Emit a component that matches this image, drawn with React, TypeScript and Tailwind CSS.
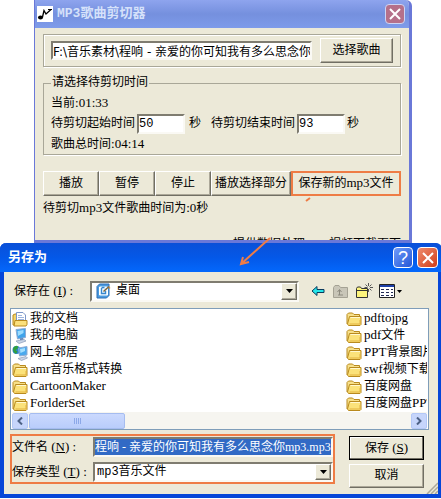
import React, { useEffect, useRef } from 'react';
import clsx from 'clsx';

const latin = "font-['Liberation_Serif',serif] text-[13px] whitespace-pre";

// Latin runs use their own font next to the Chinese text
const Txt: React.FC<{ children: string; className?: string }> = ({ children, className }) => (
  <span className={clsx('whitespace-nowrap', className)}>
    {children.split(/([\x20-\x7e]+)/).map((part, i) =>
      i % 2 ? (
        <span key={i} className={latin}>
          {part}
        </span>
      ) : (
        part
      )
    )}
  </span>
);

const sunken = 'border-2 border-t-[#7f7c70] border-l-[#7f7c70] border-r-[#faf9f4] border-b-[#faf9f4] bg-white';
const raised =
  'bg-[#ece9d8] border border-t-white border-l-white border-r-[#716f64] border-b-[#716f64] shadow-[inset_-1px_-1px_0_#aca899] text-center whitespace-nowrap';

const FolderIcon = () => (
  <svg width="16" height="16" viewBox="0 0 16 16" className="shrink-0">
    <path d="M1 13V3.5L2.5 2h4L8 3.5h5.5V6" fill="#f7e08a" stroke="#b98a1e" />
    <path d="M3.5 5.5h11.500v8l-1 1H2.500L1.500 13z" fill="#fbe27a" stroke="#b98a1e" />
    <path d="M4.500 6.500h9.500" stroke="#fff8cf" />
    <path d="M3.500 13h10.500v-4" stroke="#e2b23f" fill="none" />
  </svg>
);

const DocumentsIcon = () => (
  <svg width="16" height="16" viewBox="0 0 16 16" className="shrink-0">
    <path d="M1 14V4l2-1h3v11z" fill="#f3d468" stroke="#b98a1e" />
    <path d="M4.500 10V1.500h6.500l2.500 2.500v6z" fill="#fff" stroke="#7d97c8" />
    <path d="M6 4.500h4M6 6.500h6M6 8.500h6" stroke="#9db4dd" />
    <path d="M3 9.500h12v4l-1 1.500H2z" fill="#fbe07c" stroke="#b98a1e" />
  </svg>
);

const ComputerIcon = () => (
  <svg width="16" height="16" viewBox="0 0 16 16" className="shrink-0">
    <path d="M4 1.500l9.500-1v9l-8 1.500z" fill="#3fa3ea" stroke="#8eabd4" />
    <path d="M5.500 3l6-1v3l-5.500 3z" fill="#9bdcff" />
    <path d="M8 10.500l3-.5.500 2.500H8z" fill="#5d84b8" />
    <path d="M4 13l8-1.500 2 1.500-7 2.500z" fill="#c9d5e8" stroke="#8698b6" strokeWidth=".7" />
  </svg>
);

const NetworkIcon = () => (
  <svg width="16" height="16" viewBox="0 0 16 16" className="shrink-0">
    <circle cx="4.500" cy="5" r="4" fill="#2b83cf" />
    <path d="M1 4c1-3 4-4 5-2.500L5.500 4 3.500 5l2 1.500L4 9C2 8 1 6 1 4z" fill="#31a03b" />
    <path d="M6.500 3l8.500-1.500v8.500l-7.500 1z" fill="#49a9ee" stroke="#8eabd4" />
    <path d="M8 4l5-1v3l-4.500 2z" fill="#a2dfff" />
    <path d="M6 13.500l8-2 1.500 1.500-6 2.500z" fill="#c9d5e8" stroke="#8698b6" strokeWidth=".7" />
  </svg>
);

const DesktopIcon = () => (
  <svg width="16" height="16" viewBox="0 0 16 16" className="shrink-0">
    <path d="M1 3.500L3.500 1h9.500v11.500L10.500 15H1z" fill="#4a9be0" stroke="#2f6fb5" />
    <path d="M3.500 4h8v8h-8z" fill="#e9f6ff" stroke="#fff" />
    <path d="M8.500 4.500h-2l-1 1v5h4V8" fill="none" stroke="#3887ce" strokeWidth="1.300" />
    <path d="M7.500 8.500l5.500-5" stroke="#7b6338" strokeWidth="1.500" />
    <path d="M12.500 3l2 2-1.500 1" fill="#d88f3c" />
  </svg>
);

const DropArrow = () => (
  <span className={clsx('pointer-events-none flex w-4 shrink-0 items-center justify-center', raised)}>
    <svg width="7" height="4" viewBox="0 0 7 4">
      <path d="M0 0h7L3.500 4z" />
    </svg>
  </span>
);

const Chevron: React.FC<{ left?: boolean }> = ({ left }) => (
  <button
    type="button"
    aria-label={left ? '向左滚动' : '向右滚动'}
    className="flex h-4 w-4 shrink-0 items-center justify-center rounded-xs border border-[#b4c8f6] bg-[#c6d5fb]"
  >
    <svg width="6" height="8" viewBox="0 0 6 8" fill="none" stroke="#4d6185" strokeWidth="2">
      <path d={left ? 'M5 .5L1.500 4 5 7.500' : 'M1 .5L4.500 4 1 7.500'} />
    </svg>
  </button>
);

const columns = [
  [
    { name: '我的文档', Icon: DocumentsIcon },
    { name: '我的电脑', Icon: ComputerIcon },
    { name: '网上邻居', Icon: NetworkIcon },
    { name: 'amr音乐格式转换', Icon: FolderIcon },
    { name: 'CartoonMaker', Icon: FolderIcon },
    { name: 'ForlderSet', Icon: FolderIcon },
  ],
  [
    { name: 'pdftojpg', Icon: FolderIcon },
    { name: 'pdf文件', Icon: FolderIcon },
    { name: 'PPT背景图片', Icon: FolderIcon },
    { name: 'swf视频下载', Icon: FolderIcon },
    { name: '百度网盘', Icon: FolderIcon },
    { name: '百度网盘PPT', Icon: FolderIcon },
  ],
];

const CutterWindow = () => (
  <section className="mr-[29px] ml-[34px] h-[243px] overflow-hidden rounded-tr-md border-r-3 border-b-3 border-l border-[#6a78d8] bg-[#ece9d8]">
    <header className="flex h-7 items-center bg-linear-to-b from-[#8ea4ee] via-[#7590de] to-[#7e9bea] pr-1 pl-0.5">
      <svg width="16" height="16" viewBox="0 0 16 16" className="bg-white">
        <ellipse cx="3.500" cy="11.500" rx="2.500" ry="2" />
        <path d="M5.500 11L7 4.500 9 8l5-4.500" fill="none" stroke="#000" strokeWidth="1.300" />
        <path d="M11 3.500h4" stroke="#000" />
      </svg>
      <h1 className="ml-1 flex-1 text-[13px] font-bold text-[#d5e1fa]">MP3歌曲剪切器</h1>
      <button
        type="button"
        aria-label="关闭"
        className="flex h-5 w-5 items-center justify-center rounded-sm border border-[#cdd4f3] bg-[#b5708a]"
      >
        <svg width="12" height="12" viewBox="0 0 12 12" stroke="#fff" strokeWidth="2">
          <path d="M1 1l10 10M11 1L1 11" />
        </svg>
      </button>
    </header>

    <div className="px-2 pt-1.5">
      {/* Fichier source */}
      <div className="flex h-[33px] items-center gap-2 border border-[#a9a798] px-[7px] shadow-[inset_1px_1px_0_#fff,1px_1px_0_#fff]">
        <input
          aria-label="歌曲文件"
          className={clsx("h-[19px] min-w-0 flex-1 font-['DejaVu_Sans','Noto_Sans_CJK_SC',sans-serif]", sunken)}
          defaultValue="F:\音乐素材\程响 - 亲爱的你可知我有多么思念你.mp3"
        />
        <button type="button" className={clsx('h-[25px] w-[73px]', raised)}>
          选择歌曲
        </button>
      </div>

      {/* Intervalle à couper */}
      <fieldset className="mt-2 h-20 border border-[#a9a798] px-[7px] shadow-[1px_1px_0_#fff]">
        <legend className="px-px leading-4">请选择待剪切时间</legend>
        <div className="mt-1 leading-4">
          <Txt>当前:01:33</Txt>
        </div>
        <div className="flex h-6 items-center">
          <label htmlFor="start">待剪切起始时间</label>
          <input id="start" className={clsx('ml-0.5 h-5 w-12', sunken)} defaultValue="50" />
          <span className="ml-1">秒</span>
          <label htmlFor="end" className="ml-2.5">
            待剪切结束时间
          </label>
          <input id="end" className={clsx('ml-0.5 h-5 w-12', sunken)} defaultValue="93" />
          <span className="ml-0.5">秒</span>
        </div>
        <div className="leading-4">
          <Txt>歌曲总时间:04:14</Txt>
        </div>
      </fieldset>

      <div className="mt-4 flex h-[25px]">
        <button type="button" className={clsx('w-14', raised)}>播放</button>
        <button type="button" className={clsx('w-14', raised)}>暂停</button>
        <button type="button" className={clsx('w-14', raised)}>停止</button>
        <button type="button" className={clsx('w-20', raised)}>播放选择部分</button>
        <button type="button" className="flex-1 border-2 border-[#ee7c45] bg-[#ece9d8]">
          <Txt>保存新的mp3文件</Txt>
        </button>
      </div>
      <p className="mt-1 leading-4">
        <Txt>待剪切mp3文件歌曲时间为:0秒</Txt>
      </p>
      <p className="mt-5 flex justify-end gap-6 leading-4 whitespace-nowrap">
        <span>提供数据处理</span>
        <span>视频下载页面</span>
      </p>
    </div>
  </section>
);

const SaveDialog = () => {
  const fileName = useRef<HTMLInputElement>(null);

  // Show the end of the file name
  useEffect(() => {
    if (fileName.current) fileName.current.scrollLeft = fileName.current.scrollWidth;
  }, []);

  return (
    <section className="relative rounded-t-md border-r-3 border-b-4 border-l-4 border-[#0646d8] bg-[#ece9d8]">
      <header className="-mx-1 flex h-[29px] items-center gap-1 rounded-t-md bg-linear-to-b from-[#0a50d8] via-[#0458e8] to-[#0468fc] pr-1 pl-2">
        <h2 className="flex-1 text-[13px] font-bold text-white">另存为</h2>
        <button
          type="button"
          aria-label="帮助"
          className="flex h-[21px] w-5 items-center justify-center rounded-sm border border-white bg-linear-to-br from-[#6f9bfa] to-[#2554d6] font-['Liberation_Sans',sans-serif] text-lg leading-4 text-white"
        >
          ?
        </button>
        <button
          type="button"
          aria-label="关闭"
          className="flex h-[21px] w-[21px] items-center justify-center rounded-sm border border-white bg-linear-to-br from-[#ee8a6c] to-[#cf3a13]"
        >
          <svg width="12" height="12" viewBox="0 0 12 12" stroke="#fff" strokeWidth="2">
            <path d="M1 1l10 10M11 1L1 11" />
          </svg>
        </button>
      </header>

      <div className="flex h-9 items-center pt-0.5 pl-2.5">
        <label htmlFor="folder" className="w-19 shrink-0">
          保存在<span className={latin}> (<u>I</u>) :</span>
        </label>
        <div className={clsx('flex h-[21px] min-w-0 flex-1 pl-1', sunken)}>
          <DesktopIcon />
          <select id="folder" className="min-w-0 flex-1 appearance-none pl-1">
            <option>桌面</option>
          </select>
          <DropArrow />
        </div>
        <div className="flex items-center pr-9 pl-3">
          <button type="button" aria-label="后退">
            <svg width="14" height="12" viewBox="0 0 14 12">
              <path d="M1 6l5-4.500v3h7v3H6v3z" fill="#26e6ea" stroke="#0b3a5c" />
            </svg>
          </button>
          <button type="button" aria-label="向上" className="ml-2">
            <svg width="16" height="15" viewBox="0 0 16 15">
              <path d="M.5 13.500v-10l1.500-2h4l1.500 2h7v10z" fill="#c9c6b8" stroke="#a5a294" />
              <path d="M5 11h5M6.500 11V6M4.500 8l2-2.500L8.500 8" fill="none" stroke="#8d8a7e" />
            </svg>
          </button>
          <button type="button" aria-label="新建文件夹" className="ml-1.5">
            <svg width="18" height="16" viewBox="0 0 18 16">
              <path d="M1.500 14.500v-9l1-1.500h3l1 1.500h6v9z" fill="#fdf47c" stroke="#333" />
              <path d="M1.500 7.500h11" stroke="#333" />
              <path d="M13.500 0v3M13.500 6v3M9.500 4.500h3M15 4.500h3M10.500 1.500l2 2M16.500 1.500l-2 2M16.500 7.500l-2-2" stroke="#555" />
            </svg>
          </button>
          <button type="button" aria-label="查看" className="ml-1.5 flex items-center gap-0.5">
            <svg width="16" height="14" viewBox="0 0 16 14">
              <path d="M.5.5h15v13H.5z" fill="#fff" stroke="#222" />
              <path d="M1 1h14v2H1z" fill="#1c3fa8" />
              <path d="M2 5.500h3M7 5.500h3M12 5.500h2M2 8.500h3M7 8.500h3M12 8.500h2M2 11.500h3M7 11.500h3M12 11.500h2" stroke="#222a55" />
            </svg>
            <svg width="5" height="3" viewBox="0 0 5 3">
              <path d="M0 0h5L2.500 3z" />
            </svg>
          </button>
        </div>
      </div>

      {/* Liste des dossiers */}
      <div className="mr-[9px] ml-1.5 border border-[#7f9db9] bg-white px-px">
        <div className="flex overflow-hidden pt-px">
          {columns.map((items, i) => (
            <ul key={i} className={clsx('shrink-0', i === 0 ? 'w-[334px]' : 'w-40')}>
              {items.map(({ name, Icon }) => (
                <li key={name} className="flex h-[17px] items-center gap-0.5">
                  <Icon />
                  <Txt>{name}</Txt>
                </li>
              ))}
            </ul>
          ))}
        </div>
        <div className="flex h-[17px] items-center bg-[#f6f5f0]">
          <Chevron left />
          <div className="ml-px flex h-4 w-24 items-center justify-center gap-px rounded-xs border border-[#a5bcf0] bg-linear-to-b from-[#cbd9fe] to-[#b9cdfb]">
            {[0, 1, 2, 3].map((n) => (
              <span key={n} className="h-1.5 w-px bg-[#8ca8e8]" />
            ))}
          </div>
          <span className="flex-1" />
          <Chevron />
        </div>
      </div>

      <div className="mt-1 flex pr-3.5 pb-1.5 pl-1.5">
        <div className="flex h-[50px] min-w-0 flex-1 flex-col justify-between border-2 border-[#ee7c45] pt-px">
          <div className="flex items-center">
            <label htmlFor="file" className="w-[81px] shrink-0">
              文件名<span className={latin}> (<u>N</u>) :</span>
            </label>
            <div className={clsx('h-5 min-w-0 flex-1', sunken)}>
              <input
                id="file"
                ref={fileName}
                className="block h-4 w-full bg-[#316ac5] font-['Liberation_Serif','Noto_Sans_CJK_SC',serif] text-white"
                defaultValue="程响 - 亲爱的你可知我有多么思念你mp3.mp3"
              />
            </div>
          </div>
          <div className="flex items-center">
            <label htmlFor="type" className="w-[81px] shrink-0">
              保存类型<span className={latin}> (<u>T</u>) :</span>
            </label>
            <div className={clsx('flex h-5 min-w-0 flex-1', sunken)}>
              <select id="type" className="min-w-0 flex-1 appearance-none pl-0.5">
                <option>mp3音乐文件</option>
              </select>
              <DropArrow />
            </div>
          </div>
        </div>
        <div className="ml-3.5 flex w-[75px] flex-col gap-1 pt-0.5">
          <button type="button" className="h-6 border border-black bg-[#ece9d8] shadow-[inset_-1px_-1px_0_#716f64,inset_1px_1px_0_#fff]">
            保存<span className={latin}> (<u>S</u>)</span>
          </button>
          <button type="button" className={clsx('h-6', raised)}>
            取消
          </button>
        </div>
      </div>

      {/* Poignée de redimensionnement */}
      <svg width="12" height="12" viewBox="0 0 12 12" className="absolute right-0 bottom-0" stroke="#aca899" strokeWidth="1.500">
        <path d="M1 12L12 1M5 12l7-7M9 12l3-3" />
      </svg>
      {/* Flèche vers la boîte de dialogue */}
      <svg width="80" height="70" viewBox="0 0 80 70" className="pointer-events-none absolute -top-[46px] left-[232px]" fill="none" stroke="#ee7c45" strokeWidth="2">
        <path d="M70 4l4-3M34 41L5 67M7 60L5 67l8-2" />
      </svg>
    </section>
  );
};

const App: React.FC = () => (
  <main className="bg-white font-['Liberation_Mono','Noto_Sans_CJK_SC',monospace] text-xs leading-4 text-black">
    <CutterWindow />
    <SaveDialog />
  </main>
);

export default App;
